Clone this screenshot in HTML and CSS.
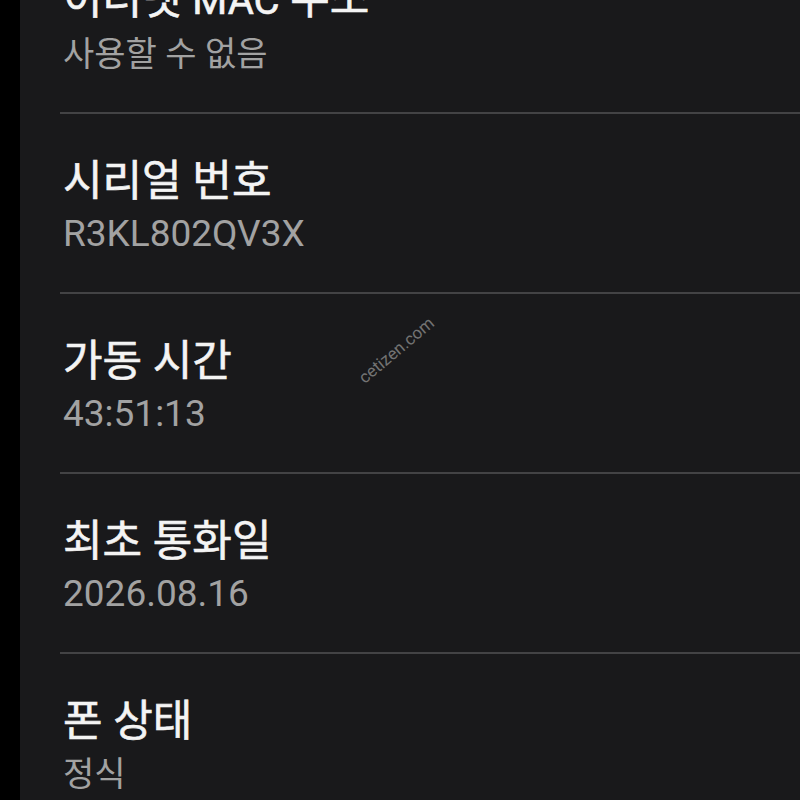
FILE: index.html
```html
<!DOCTYPE html>
<html>
<head>
  <meta charset="utf-8">
  <title>휴대전화 정보</title>
  <link rel="stylesheet" href="styles.css">
</head>
<body>
  <div class="screen">
    <div class="edge"></div>
    <div class="panel">
      <ul class="info-list">
        <li class="info-row">
          <div class="info-title">이더넷 <span class="latin">MAC</span> 주소</div>
          <div class="info-value">사용할 수 없음</div>
        </li>
        <li class="info-row">
          <div class="info-title">시리얼 번호</div>
          <div class="info-value latin">R3KL802QV3X</div>
        </li>
        <li class="info-row">
          <div class="info-title">가동 시간</div>
          <div class="info-value latin">43:51:13</div>
        </li>
        <li class="info-row">
          <div class="info-title">최초 통화일</div>
          <div class="info-value latin">2026.08.16</div>
        </li>
        <li class="info-row">
          <div class="info-title">폰 상태</div>
          <div class="info-value">정식</div>
        </li>
      </ul>
      <div class="watermark">cetizen.com</div>
    </div>
  </div>
</body>
</html>
```

FILE: styles.css
```css
html, body {
  margin: 0;
  padding: 0;
  background-color: #000;
  font-family: Roboto, "Noto Sans CJK KR", sans-serif;
}

.screen {
  display: flex;
  width: 800px;
  height: 800px;
  overflow: hidden;
}

.edge {
  width: 20px;
  flex-shrink: 0;
  background-color: #000;
}

.panel {
  position: relative;
  flex: 1;
  background-color: #19191b;
  overflow: hidden;
}

.info-list {
  list-style: none;
  margin: -68px 0 0 40px;
  padding: 0;
}

.info-row {
  padding: 42px 0 36px 3px;
  border-bottom: 2px solid #434345;
}

.info-title {
  font-size: 43px;
  line-height: 50px;
  color: #f4f4f4;
  -webkit-text-stroke: 0.6px #f4f4f4;
}

.info-title .latin {
  font-size: 40px;
}

.info-value {
  margin-top: 6px;
  font-size: 34px;
  line-height: 44px;
  color: #a2a2a2;
}

.info-value.latin {
  font-size: 37px;
}

/* watermark over the list */
.watermark {
  position: absolute;
  left: 330px;
  top: 340px;
  font-size: 17px;
  color: #737373;
  transform: rotate(-40deg);
}
```
